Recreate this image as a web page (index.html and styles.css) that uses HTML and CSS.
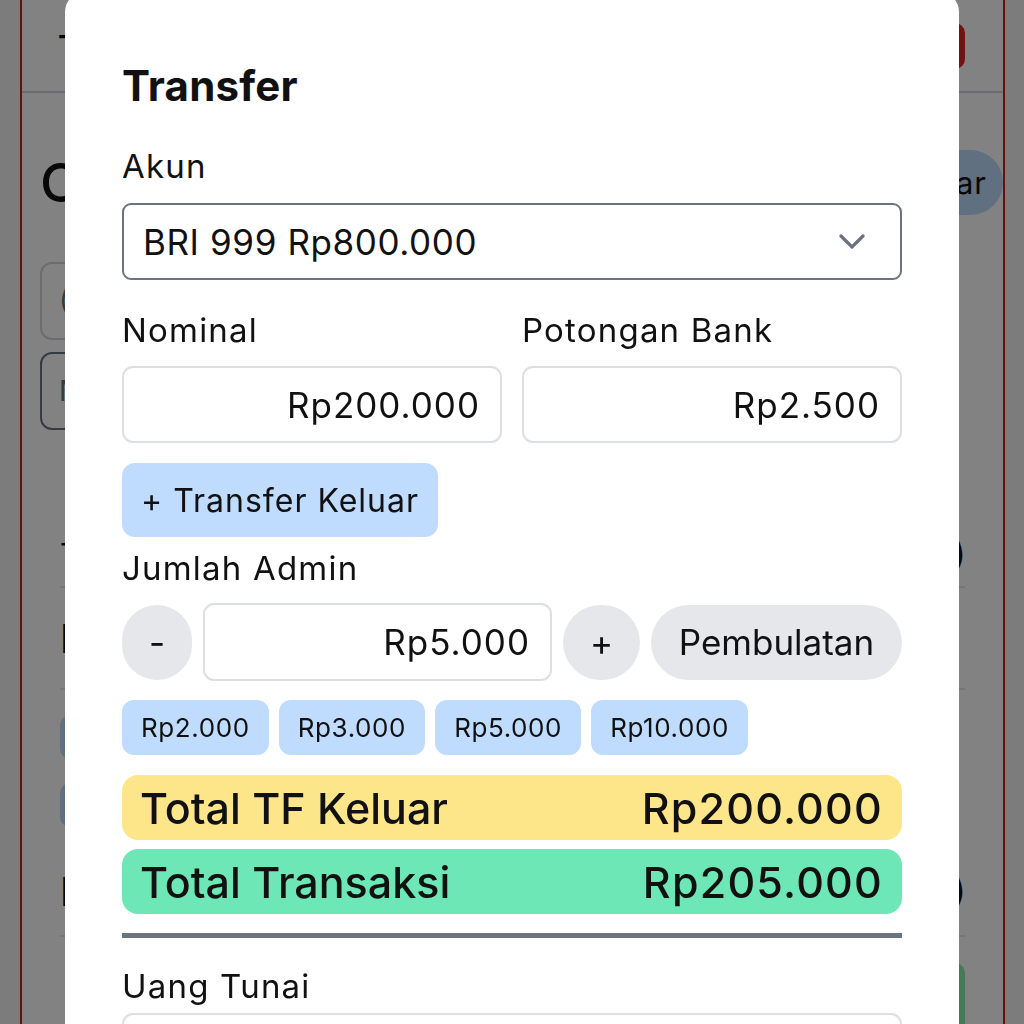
FILE: index.html
```html
<!DOCTYPE html>
<html lang="id">
<head>
<meta charset="utf-8">
<title>Transfer</title>
<link rel="stylesheet" href="styles.css">
</head>
<body>
<div class="page">
  <header class="topbar">
    <span class="topbar-title">Transaksi</span>
    <button class="btn-danger">Keluar</button>
  </header>
  <div class="page-body">
    <div class="page-head">
      <h1 class="page-title">Catatan</h1>
      <button class="btn-soft">Tukar</button>
    </div>
    <div class="page-field">(Cari</div>
    <div class="page-field page-field-dark">Nama</div>
    <div class="page-list">
      <div class="page-row"><span class="row-head">Tunai</span><span class="row-val">(0)</span></div>
      <div class="page-row page-row-tall"><span class="row-big">BRI</span></div>
      <div class="page-chips"><span class="page-chip">Tarik</span><span class="page-chip">Setor</span></div>
      <div class="page-row page-row-last"><span class="row-big">BNI</span><span class="row-val">(0)</span></div>
      <div class="page-green"></div>
    </div>
  </div>
</div>

<div class="overlay">
  <div class="modal">
    <h2 class="modal-title">Transfer</h2>

    <label class="label label-akun">Akun</label>
    <div class="select">
      <span>BRI 999 Rp800.000</span>
      <svg class="chevron" width="28" height="18" viewBox="0 0 28 18"><path d="M3 3 L14 14 L25 3" fill="none" stroke="#6b7280" stroke-width="3.2" stroke-linecap="round" stroke-linejoin="round"/></svg>
    </div>

    <div class="two-col">
      <div class="col">
        <label class="label">Nominal</label>
        <div class="input">Rp200.000</div>
      </div>
      <div class="col">
        <label class="label">Potongan Bank</label>
        <div class="input">Rp2.500</div>
      </div>
    </div>

    <button class="btn-add">+ Transfer Keluar</button>

    <label class="label label-admin">Jumlah Admin</label>
    <div class="admin-row">
      <button class="btn-round btn-minus">-</button>
      <div class="input input-admin">Rp5.000</div>
      <button class="btn-round btn-plus">+</button>
      <button class="btn-round btn-bulat">Pembulatan</button>
    </div>

    <div class="chips">
      <span class="chip">Rp2.000</span>
      <span class="chip">Rp3.000</span>
      <span class="chip">Rp5.000</span>
      <span class="chip">Rp10.000</span>
    </div>

    <div class="total total-tf"><span>Total TF Keluar</span><span class="total-val">Rp200.000</span></div>
    <div class="total total-trx"><span>Total Transaksi</span><span class="total-val">Rp205.000</span></div>

    <hr class="divider">

    <label class="label label-tunai">Uang Tunai</label>
    <div class="input input-tunai"></div>
  </div>
</div>
</body>
</html>
```

FILE: styles.css
```css
* { box-sizing: border-box; }
html, body { margin: 0; padding: 0; }
body {
  width: 1024px;
  height: 1024px;
  overflow: hidden;
  background: #f3f4f6;
  font-family: Inter, "Noto Sans", sans-serif;
  color: #111;
}
button { font-family: inherit; border: none; cursor: pointer; }

/* underlying page */
.page {
  margin-left: 20px;
  width: 985px;
  height: 1024px;
  background: #fff;
  border-left: 2px solid #c81e1e;
  border-right: 2px solid #c81e1e;
}
.topbar {
  height: 93px;
  border-bottom: 2px solid #d1d5db;
  display: flex;
  align-items: center;
  justify-content: space-between;
  padding: 0 38px 0 36px;
}
.topbar-title { font-size: 30px; font-weight: 600; }
.btn-danger {
  height: 46px;
  padding: 0 22px;
  border-radius: 10px;
  background: #dc2626;
  color: #fff;
  font-size: 24px;
}
.page-body { padding: 0 38px 0 18px; }
.page-head {
  margin-top: 57px;
  display: flex;
  align-items: center;
  justify-content: space-between;
}
.page-title { margin: 0; font-size: 54px; font-weight: 500; }
.btn-soft {
  height: 65px;
  padding: 0 16px 0 26px;
  margin-right: -38px;
  border-radius: 33px;
  background: #bfdbfe;
  font-size: 31px;
  color: #111;
  letter-spacing: 1px;
}
.page-field {
  margin-top: 47px;
  height: 78px;
  width: 880px;
  border: 2px solid #d1d5db;
  border-radius: 12px;
  padding: 0 17px;
  display: flex;
  align-items: center;
  font-size: 28px;
  color: #6b7280;
}
.page-field-dark { margin-top: 12px; border-color: #6b7280; }
.page-list { margin-top: 92px; padding-left: 20px; }
.page-row {
  height: 66px;
  display: flex;
  align-items: center;
  justify-content: space-between;
  border-bottom: 2px solid #e5e7eb;
  font-size: 30px;
}
.page-row-tall { height: 102px; }
.row-big { font-size: 40px; font-weight: 500; }
.row-val { font-size: 34px; font-weight: 700; }
.page-chips { padding-top: 25px; display: flex; flex-direction: column; gap: 24px; }
.page-chip {
  align-self: flex-start;
  height: 44px;
  padding: 0 24px;
  border-radius: 10px;
  background: #bfdbfe;
  display: flex;
  align-items: center;
  font-size: 24px;
}
.page-row-last { margin-top: 20px; height: 90px; }
.page-green {
  margin-top: 25px;
  margin-left: auto;
  width: 200px;
  height: 80px;
  border-radius: 12px;
  background: #86efac;
}

/* overlay + modal */
.overlay {
  position: fixed;
  inset: 0;
  background: rgba(0, 0, 0, 0.49);
  display: flex;
  justify-content: center;
  align-items: flex-start;
}
.modal {
  width: 894px;
  height: 1100px;
  margin-top: -8px;
  background: #fff;
  border-radius: 20px;
  padding: 70px 57px 0 57px;
  display: flex;
  flex-direction: column;
}
.modal-title {
  margin: 0;
  font-size: 42px;
  line-height: 48px;
  font-weight: 700;
  letter-spacing: 0.2px;
}
.label {
  display: block;
  font-size: 33px;
  line-height: 40px;
  letter-spacing: 1.2px;
  color: #111;
}
.label-akun { margin-top: 36px; }
.select {
  margin-top: 17px;
  height: 77px;
  border: 2px solid #6b7280;
  border-radius: 9px;
  padding: 0 34px 0 19px;
  display: flex;
  align-items: center;
  justify-content: space-between;
  font-size: 35px;
  letter-spacing: 0.6px;
}
.two-col {
  margin-top: 30px;
  display: grid;
  grid-template-columns: 1fr 1fr;
  gap: 20px;
}
.input {
  height: 77px;
  border: 2px solid #dcdfe4;
  border-radius: 11px;
  padding: 0 20px;
  display: flex;
  align-items: center;
  justify-content: flex-end;
  font-size: 35px;
  letter-spacing: 1px;
}
.col .input { margin-top: 16px; }
.btn-add {
  margin-top: 20px;
  align-self: flex-start;
  height: 74px;
  padding: 0 19px;
  border-radius: 13px;
  background: #bfdbfe;
  font-size: 32px;
  letter-spacing: 1px;
  color: #111;
}
.label-admin { margin-top: 11px; }
.admin-row {
  margin-top: 15px;
  height: 78px;
  display: flex;
  align-items: center;
  gap: 11px;
}
.btn-round {
  height: 75px;
  border-radius: 38px;
  background: #e5e7eb;
  font-size: 35px;
  color: #111;
  padding: 0;
}
.btn-minus { width: 70px; }
.btn-plus { width: 77px; }
.btn-bulat { width: 251px; }
.input-admin { flex: 1; height: 78px; }
.chips {
  margin-top: 19px;
  display: flex;
  gap: 10px;
}
.chip {
  height: 55px;
  padding: 0 19px;
  border-radius: 12px;
  background: #bfdbfe;
  display: flex;
  align-items: center;
  font-size: 26px;
  letter-spacing: 0.6px;
}
.total {
  height: 65px;
  border-radius: 16px;
  padding: 0 19px 0 18px;
  display: flex;
  align-items: center;
  justify-content: space-between;
  font-size: 43px;
  font-weight: 500;
}
.total-val { letter-spacing: 1.2px; }
.total-tf { margin-top: 20px; background: #fde68a; }
.total-trx { margin-top: 9px; background: #6ee7b7; }
.divider {
  margin: 19px 0 0;
  border: none;
  height: 5px;
  background: #6b7280;
}
.label-tunai { margin-top: 28px; }
.input-tunai { margin-top: 7px; }
```
